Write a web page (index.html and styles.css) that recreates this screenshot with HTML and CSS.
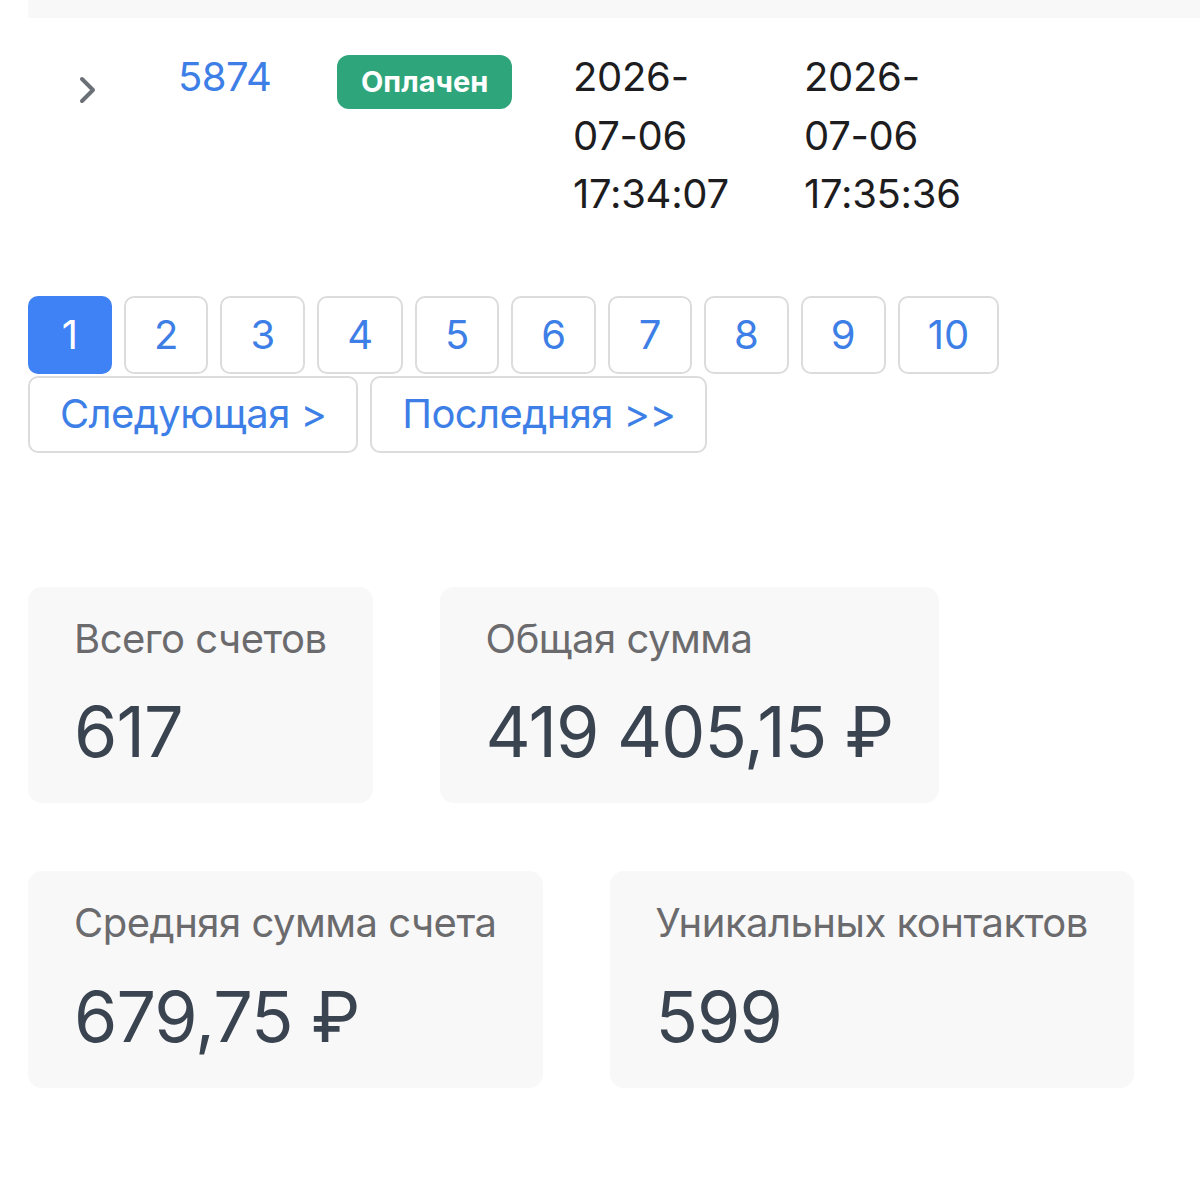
FILE: index.html
```html
<!DOCTYPE html>
<html lang="ru">
<head>
  <meta charset="UTF-8">
  <title>Счета</title>
  <link rel="stylesheet" href="styles.css">
</head>
<body>

<div class="table-head"></div>

<div class="page">
  <div class="invoice-row">
    <div class="cell cell-toggle">
      <svg class="chevron" width="18" height="28" viewBox="0 0 18 28">
        <path d="M3 3 L14 14 L3 25" fill="none" stroke="#6b6f76" stroke-width="4" stroke-linecap="round" stroke-linejoin="round"/>
      </svg>
    </div>
    <div class="cell cell-id"><a href="#">5874</a></div>
    <div class="cell cell-status"><span class="badge">Оплачен</span></div>
    <div class="cell cell-date">
      <span>2026-</span>
      <span>07-06</span>
      <span>17:34:07</span>
    </div>
    <div class="cell cell-date">
      <span>2026-</span>
      <span>07-06</span>
      <span>17:35:36</span>
    </div>
  </div>

  <div class="pager">
    <a href="#" class="page-btn active">1</a>
    <a href="#" class="page-btn">2</a>
    <a href="#" class="page-btn">3</a>
    <a href="#" class="page-btn">4</a>
    <a href="#" class="page-btn">5</a>
    <a href="#" class="page-btn">6</a>
    <a href="#" class="page-btn">7</a>
    <a href="#" class="page-btn">8</a>
    <a href="#" class="page-btn">9</a>
    <a href="#" class="page-btn">10</a>
    <a href="#" class="page-btn wide">Следующая &gt;</a>
    <a href="#" class="page-btn wide">Последняя &gt;&gt;</a>
  </div>

  <div class="stats">
    <div class="stat-card">
      <div class="stat-label">Всего счетов</div>
      <div class="stat-value">617</div>
    </div>
    <div class="stat-card">
      <div class="stat-label">Общая сумма</div>
      <div class="stat-value">419 405,15 ₽</div>
    </div>
    <div class="stat-card">
      <div class="stat-label">Средняя сумма счета</div>
      <div class="stat-value">679,75 ₽</div>
    </div>
    <div class="stat-card">
      <div class="stat-label">Уникальных контактов</div>
      <div class="stat-value">599</div>
    </div>
  </div>
</div>

</body>
</html>
```

FILE: styles.css
```css
body {
  margin: 0;
  font-family: Inter, "Noto Sans", sans-serif;
  font-size: 40px;
  line-height: 58.5px;
  color: #1d1d1f;
  background: #fff;
}
.table-head {
  height: 18px;
  margin-left: 28px;
  background-color: #f8f8f9;
}
.page {
  padding: 0 28px;
}

/* invoice row */
.invoice-row {
  display: flex;
  align-items: flex-start;
  padding-top: 30px;
}
.cell-toggle {
  width: 150px;
  box-sizing: border-box;
  padding-left: 51px;
}
.chevron {
  display: block;
  margin-top: 28px;
}
.cell-id {
  width: 159px;
  letter-spacing: -0.5px;
}
.cell-id a {
  color: #3d7fe6;
  text-decoration: none;
}
.cell-status {
  width: 236px;
}
.badge {
  display: inline-block;
  margin-top: 7px;
  height: 54px;
  line-height: 54px;
  padding: 0 24px;
  border-radius: 12px;
  background-color: #2fa57b;
  color: white;
  font-size: 29px;
  font-weight: 700;
}
.cell-date {
  width: 231px;
  letter-spacing: -0.3px;
}
.cell-date span {
  display: block;
}

/* pagination */
.pager {
  display: flex;
  flex-wrap: wrap;
  gap: 2px 12px;
  margin-top: 72px;
  max-width: 1000px;
}
.page-btn {
  display: block;
  min-width: 24px;
  padding: 8px 28px;
  border: 2px solid #dcdcde;
  border-radius: 10px;
  color: #3d7fe6;
  text-decoration: none;
  text-align: center;
}
.page-btn.active {
  background-color: #3f82f6;
  border-color: #3f82f6;
  color: white;
}
.page-btn.wide {
  padding: 7px 30px;
  letter-spacing: -0.6px;
}

/* stats */
.stats {
  display: flex;
  flex-wrap: wrap;
  gap: 68px 67px;
  margin-top: 134px;
}
.stat-card {
  padding: 23px 46px 29px;
  border-radius: 14px;
  background-color: #f8f8f9;
}
.stat-label {
  color: #6b6b6e;
  letter-spacing: -0.5px;
}
.stat-value {
  margin-top: 22px;
  font-size: 70px;
  line-height: 84px;
  letter-spacing: -1px;
  color: #3a4350;
}
```
